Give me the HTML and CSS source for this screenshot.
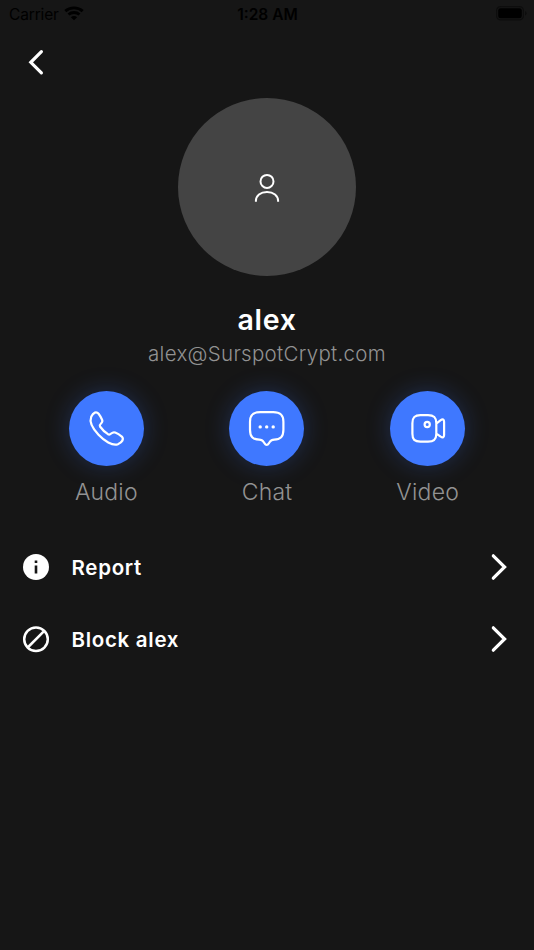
FILE: index.html
```html
<!DOCTYPE html>
<html lang="en">
<head>
<meta charset="utf-8">
<title>Contact</title>
<link rel="stylesheet" href="styles.css">
</head>
<body>
<header class="status">
  <div class="carrier"><span>Carrier</span>
    <svg width="20" height="16" viewBox="0 0 20 16" fill="none" stroke="#000" stroke-width="2.9"><path d="M1.3 6.1C6 1.8 14 1.8 18.7 6.1M4.5 9.5C7.5 6.9 12.5 6.9 15.5 9.5"/><path d="M6.8 12.2Q10 9.8 13.2 12.2L10 15.3Z" fill="#000" stroke="none"/></svg>
  </div>
  <time class="clock">1:28 AM</time>
  <div class="power">
    <svg width="31" height="15" viewBox="0 0 31 15"><rect x=".6" y=".6" width="26.8" height="13.3" rx="4" fill="none" stroke="#0d0d0d" stroke-width="1.2"/><rect x="2.2" y="2.3" width="23.6" height="9.9" rx="2.3"/><path d="M29 5Q32 7.2 29 9.5Z" fill="#0d0d0d"/></svg>
  </div>
</header>
<nav class="nav"><svg width="16" height="28" viewBox="0 0 16 28" fill="none" stroke="#fff" stroke-width="3.2" stroke-linecap="round"><path d="M13.4 3.7L2.8 14.3L13.4 24.9"/></svg></nav>
<main>
  <div class="avatar"><svg width="28" height="32" viewBox="0 0 28 32" fill="none" stroke="#fff" stroke-width="2"><circle cx="14" cy="10.4" r="6.5"/><path d="M2.9 30.7V29.8C2.9 24.7 7.4 20.9 14 20.9S25.1 24.7 25.1 29.8V30.7"/></svg></div>
  <h1 class="name">alex</h1>
  <p class="email">alex@SurspotCrypt.com</p>
  <section class="actions">
    <div class="action"><div class="disc"><svg width="39" height="39" viewBox="0 0 39 39"><path d="M4.2 7.8C6.3 3.2 9.4 2.2 11.6 4.8C13 6.6 14.1 8.6 15.1 10.8C16.8 14.5 11.5 14.5 13 17.5C15.1 20.5 17.8 23.1 21 25.2C24.2 27 24.1 22 28.2 23.5C30.5 24.4 32.8 25.9 34.8 27.6C37.2 30.1 35.2 33.3 30.9 35.2C25.5 37.3 17 31.5 11.5 25.7C6.2 20 2.2 12.7 4.2 7.8Z"/></svg></div><span>Audio</span></div>
    <div class="action"><div class="disc"><svg width="39" height="39" viewBox="0 0 39 39"><path d="M13.2 3.2H26.2C33.6 3.2 36.4 6.2 36.4 12.7V20.8C36.4 27.8 33.6 30.6 27.2 30.6C23.8 30.6 23.6 31.7 22 34.1C20.4 36.6 19 36.6 17.4 34.1C15.8 31.7 15.6 30.6 12.2 30.6C5.8 30.6 3 27.8 3 20.8V12.7C3 6.2 5.8 3.2 13.2 3.2Z"/><g class="dots"><circle cx="13.2" cy="17.9" r="1.7"/><circle cx="19.7" cy="17.9" r="1.7"/><circle cx="26.2" cy="17.9" r="1.7"/></g></svg></div><span>Chat</span></div>
    <div class="action"><div class="disc"><svg width="39" height="39" viewBox="0 0 39 39"><path d="M12.4 6.2H20C25.9 6.2 28.3 8.4 28.3 14.2V24.8C28.3 30.5 25.9 32.7 20 32.7H12.4C6.6 32.7 4.4 30.5 4.4 24.8V14.2C4.4 8.4 6.6 6.2 12.4 6.2ZM28.3 14.6L32.7 11.2C34.7 9.8 36.1 10.5 36.1 12.8V26C36.1 28.4 34.7 29 32.7 27.7L28.3 24.6"/><circle cx="19.2" cy="15.5" r="2.6"/></svg></div><span>Video</span></div>
  </section>
  <section class="menu">
    <div class="item"><svg class="lead" width="28" height="28" viewBox="0 0 28 28"><circle cx="14" cy="14" r="13" fill="#fff"/><path d="M12.7 7.5H15.3V10H12.7ZM12.7 12.4H15.3V20.6H12.7Z" fill="#161616"/></svg><span>Report</span><svg class="chevron" width="18" height="28" viewBox="0 0 18 28"><path d="M3.3 2.8L14.6 14L3.3 25.2"/></svg></div>
    <div class="item"><svg class="lead" width="28" height="28" viewBox="0 0 28 28" fill="none" stroke="#fff" stroke-width="2.5"><circle cx="14" cy="14.2" r="11.8"/><path d="M5.7 22.5L22.3 5.9"/></svg><span>Block alex</span><svg class="chevron" width="18" height="28" viewBox="0 0 18 28"><path d="M3.3 2.8L14.6 14L3.3 25.2"/></svg></div>
  </section>
</main>
</body>
</html>
```
FILE: styles.css
```css
* { box-sizing: border-box; }
body {
  margin: 0;
  min-height: 950px;
  background: #161616;
  color: #fff;
  font-family: Inter, sans-serif;
}
svg { display: block; flex: none; }
.status {
  height: 28px;
  padding: 0 8px 0 9px;
  display: grid;
  grid-template-columns: 1fr auto 1fr;
  align-items: center;
  color: #000;
  font-size: 15.5px;
}
.carrier { display: flex; align-items: center; gap: 5px; letter-spacing: -.15px; }
.carrier svg { margin-top: -3px; }
.clock { font-weight: 600; font-size: 15.5px; }
.power { display: flex; justify-content: flex-end; margin: -2px -1px 0 0; }
.nav { height: 70px; padding: 20px 0 0 27.5px; }
.avatar {
  width: 178px;
  height: 178px;
  margin: 0 auto;
  border-radius: 50%;
  background: #444;
  display: flex;
  align-items: center;
  justify-content: center;
}
.name {
  margin: 26px 0 0;
  text-align: center;
  font-size: 28.5px;
  line-height: 36px;
  font-weight: 600;
  letter-spacing: .7px;
}
.email {
  margin: 3px 0 0;
  text-align: center;
  font-size: 20.5px;
  line-height: 26px;
  font-weight: 300;
  letter-spacing: .3px;
  color: #929292;
}
.actions {
  margin: 24px 26px 0;
  display: grid;
  grid-template-columns: repeat(3, 1fr);
}
.action { display: flex; flex-direction: column; align-items: center; }
.action span {
  margin-top: 11px;
  font-size: 23px;
  line-height: 30px;
  font-weight: 300;
  letter-spacing: .2px;
  color: #929292;
}
.disc {
  width: 75px;
  height: 75px;
  border-radius: 50%;
  background: #3f78ff;
  box-shadow: 0 0 24px rgba(63, 120, 255, .25);
  display: flex;
  align-items: center;
  justify-content: center;
}
.disc svg { fill: none; stroke: #fff; stroke-width: 2.2; stroke-linejoin: round; stroke-linecap: round; }
.disc .dots { fill: #fff; stroke: none; }
.menu { margin-top: 24px; padding: 0 26px 0 21.5px; }
.item { height: 72px; display: flex; align-items: center; }
.item span {
  margin: 1px 0 0 22px;
  font-size: 20.5px;
  font-weight: 600;
  letter-spacing: .7px;
}
.chevron { margin-left: auto; fill: none; stroke: #fff; stroke-width: 3.2; stroke-linecap: round; }
```
